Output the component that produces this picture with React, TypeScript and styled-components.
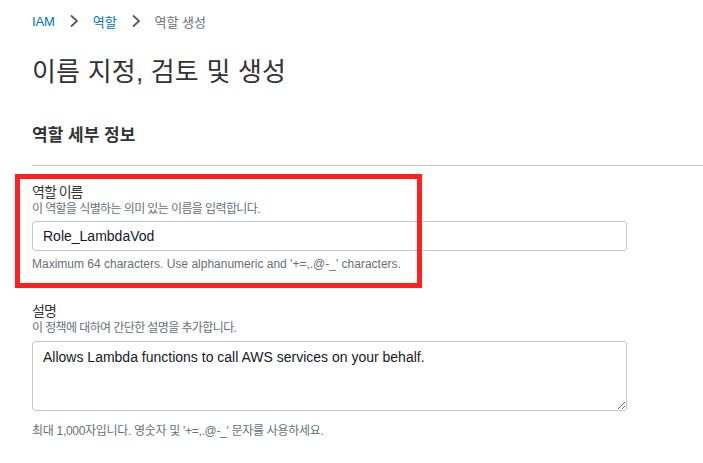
import styled, { createGlobalStyle } from "styled-components";

const GlobalStyle = createGlobalStyle`
    body {
        margin: 0;
        background: #ffffff;
        font-family: "Liberation Sans", "Noto Sans CJK KR", sans-serif;
        color: #16191f;
    }
`;

function Chevron() {
    return (
        <ChevronIcon width="10" height="14" viewBox="0 0 10 14">
            <path d="M2 1.5 L8 7 L2 12.5" fill="none" stroke="#545b64" strokeWidth="1.8" />
        </ChevronIcon>
    );
}

function App() {
    return (
        <Page>
            <GlobalStyle />
            <Breadcrumbs>
                <Crumb href="#">IAM</Crumb>
                <Chevron />
                <Crumb href="#">역할</Crumb>
                <Chevron />
                <Current>역할 생성</Current>
            </Breadcrumbs>

            <Title>이름 지정, 검토 및 생성</Title>

            <Section>
                <SectionHeader>역할 세부 정보</SectionHeader>

                <Field>
                    <Highlight />
                    <Label>역할 이름</Label>
                    <Description>이 역할을 식별하는 의미 있는 이름을 입력합니다.</Description>
                    <Input defaultValue="Role_LambdaVod" />
                    <Hint>Maximum 64 characters. Use alphanumeric and '+=,.@-_' characters.</Hint>
                </Field>

                <Field $gap={30}>
                    <Label>설명</Label>
                    <Description>이 정책에 대하여 간단한 설명을 추가합니다.</Description>
                    <TextArea defaultValue="Allows Lambda functions to call AWS services on your behalf." />
                    <Hint $korean>최대 1,000자입니다. 영숫자 및 '+=,.@-_' 문자를 사용하세요.</Hint>
                </Field>
            </Section>
        </Page>
    );
}

// STYLING
const Page = styled.main`
    padding: 11px 0 40px 32px;
`;

const Breadcrumbs = styled.nav`
    display: flex;
    align-items: center;
    gap: 14px;
    height: 20px;
    font-size: 13px;
`;

const ChevronIcon = styled.svg`
    display: block;
`;

const Crumb = styled.a`
    color: #0073bb;
    text-decoration: none;
    letter-spacing: -0.1px;
`;

const Current = styled.span`
    color: #687078;
    letter-spacing: 0;
`;

const Title = styled.h1`
    margin: 25px 0 0;
    font-size: 26px;
    line-height: 32px;
    font-weight: 400;
    color: #333333;
    letter-spacing: 0.2px;
`;

const Section = styled.section`
    margin-top: 37px;
`;

const SectionHeader = styled.h2`
    margin: 0;
    font-size: 17px;
    line-height: 22px;
    font-weight: 700;
    color: #333333;
    letter-spacing: 0;
    padding-bottom: 18px;
    border-bottom: 1px solid #c8c8c8;
`;

const Field = styled.div<{ $gap?: number }>`
    position: relative;
    display: flex;
    flex-direction: column;
    margin-top: ${(p) => p.$gap ?? 17}px;
    width: 595px;
`;

const Highlight = styled.div`
    position: absolute;
    left: -17px;
    top: -9px;
    width: 397px;
    height: 104px;
    border: 5px solid #ff2020;
    pointer-events: none;
`;

const Label = styled.label`
    font-size: 14px;
    line-height: 18px;
    color: #333333;
    letter-spacing: -1px;
`;

const Description = styled.div`
    font-size: 12px;
    line-height: 16px;
    color: #687078;
    letter-spacing: -0.6px;
`;

const Input = styled.input`
    box-sizing: border-box;
    margin-top: 4px;
    width: 595px;
    height: 30px;
    padding: 0 10px;
    border: 1px solid #c3c7c8;
    border-radius: 3px;
    font-family: "Liberation Sans", sans-serif;
    font-size: 14px;
    color: #16191f;
    outline: none;
`;

const TextArea = styled.textarea`
    box-sizing: border-box;
    margin-top: 5px;
    width: 595px;
    height: 70px;
    padding: 6px 10px;
    border: 1px solid #c3c7c8;
    border-radius: 3px;
    font-family: "Liberation Sans", sans-serif;
    font-size: 14px;
    line-height: 18px;
    color: #16191f;
    outline: none;
    resize: vertical;
`;

const Hint = styled.div<{ $korean?: boolean }>`
    margin-top: ${(p) => (p.$korean ? 12 : 5)}px;
    font-size: 12px;
    line-height: 16px;
    color: #687078;
    letter-spacing: ${(p) => (p.$korean ? "-0.3px" : "0")};
`;

export default App;
